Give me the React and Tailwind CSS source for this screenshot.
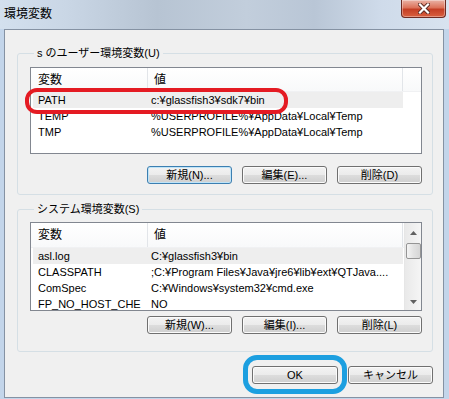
import React from "react";

// Windows 7 style "環境変数" dialog

const btnBase =
  "h-[18px] rounded-[3px] border text-[11px] leading-none text-black bg-[linear-gradient(to_bottom,#f3f3f3_0%,#ebebeb_50%,#dddddd_50%,#cfcfcf_100%)]";

function WinButton({ label, isDefault, width = "w-[85px]" }) {
  return (
    <button
      className={
        isDefault
          ? btnBase + " " + width + " border-[#3c7fb1] shadow-[inset_0_0_0_1px_#bfe4f8]"
          : btnBase + " " + width + " border-[#707070] shadow-[inset_0_0_0_1px_#fbfbfb]"
      }
    >
      {label}
    </button>
  );
}

function Arrow({ down }) {
  return (
    <svg width="7" height="4" viewBox="0 0 7 4">
      {down ? (
        <polygon points="0,0 7,0 3.5,4" fill="#606060" />
      ) : (
        <polygon points="0,4 7,4 3.5,0" fill="#606060" />
      )}
    </svg>
  );
}

function Scrollbar() {
  return (
    <div className="flex w-[17px] shrink-0 flex-col items-center border-l border-[#e6e6e6] bg-[linear-gradient(to_right,#e9e9e9,#f5f5f5)]">
      <div className="flex h-[17px] w-full items-center justify-center pt-[3px]">
        <Arrow />
      </div>
      <div className="mt-[3px] h-[16px] w-[15px] rounded-[2px] border border-[#959595] bg-[linear-gradient(to_right,#f4f4f4,#e2e2e2_50%,#d6d6d6)]" />
      <div className="flex-1" />
      <div className="flex h-[17px] w-full items-center justify-center">
        <Arrow down />
      </div>
    </div>
  );
}

function ListView({ rows, className, headerClass, withScroll }) {
  return (
    <div className={"flex overflow-hidden border border-[#828790] bg-white " + className}>
      <div className="flex min-w-0 flex-1 flex-col">
        <div className={"flex shrink-0 border-b border-[#f0f1f3] bg-[linear-gradient(to_bottom,#ffffff,#f8f9fa)] " + headerClass}>
          <div className="flex w-[117px] items-center border-r border-[#e2e5e9] pl-[7px] text-[12px]">変数</div>
          <div className="flex w-[255px] items-center border-r border-[#e2e5e9] pl-[6px] text-[12px]">値</div>
          <div className="flex-1" />
        </div>
        {rows.map((r, i) => (
          <div key={i} className="flex h-[16px] shrink-0">
            <div
              className={
                i === 0
                  ? "ml-[2px] flex w-[370px] bg-[#eeeeee] text-[11px] leading-[16px]"
                  : "ml-[2px] flex w-[370px] text-[11px] leading-[16px]"
              }
            >
              <div className="w-[115px] shrink-0 overflow-hidden whitespace-nowrap pl-[5px]">{r[0]}</div>
              <div className="min-w-0 flex-1 overflow-hidden whitespace-nowrap pl-[3px]">{r[1]}</div>
            </div>
          </div>
        ))}
      </div>
      {withScroll && <Scrollbar />}
    </div>
  );
}

const userVars = [
  ["PATH", "c:¥glassfish3¥sdk7¥bin"],
  ["TEMP", "%USERPROFILE%¥AppData¥Local¥Temp"],
  ["TMP", "%USERPROFILE%¥AppData¥Local¥Temp"],
];

const sysVars = [
  ["asl.log", "C:¥glassfish3¥bin"],
  ["CLASSPATH", ";C:¥Program Files¥Java¥jre6¥lib¥ext¥QTJava...."],
  ["ComSpec", "C:¥Windows¥system32¥cmd.exe"],
  ["FP_NO_HOST_CHE", "NO"],
];

export default function App() {
  return (
    <div className="relative flex h-[399px] w-[449px] flex-col overflow-hidden bg-[#c3d5ea] font-['Liberation_Sans','Noto_Sans_CJK_JP',sans-serif] text-black">
      {/* Title bar */}
      <div className="flex h-[29px] shrink-0 items-start justify-between bg-[linear-gradient(to_right,#d3e0ee_0%,#c9d6e5_15%,#b7c4d3_35%,#c2cedc_55%,#b9c6d6_70%,#cfdbea_85%,#d8e3ef_100%)]">
        <div className="pl-[4px] pt-[7px] text-[12px] leading-[14px]">環境変数</div>
        <div className="mr-[3px] flex h-[18px] w-[45px] items-center justify-center rounded-b-[4px] border border-t-0 border-[#6e2b22] bg-[linear-gradient(to_bottom,#eab3a6_0%,#dc735a_45%,#c43f25_55%,#d9603f_100%)] shadow-[inset_0_0_0_1px_rgba(255,255,255,0.35)]">
          <svg width="12" height="11" viewBox="0 0 12 11">
            <path d="M2 1.5 L10 9.5 M10 1.5 L2 9.5" stroke="#5a2a22" strokeWidth="4" strokeLinecap="square" />
            <path d="M2 1.5 L10 9.5 M10 1.5 L2 9.5" stroke="#ffffff" strokeWidth="2.2" strokeLinecap="square" />
          </svg>
        </div>
      </div>

      {/* Client area */}
      <div className="mb-[1px] ml-[4px] flex w-[440px] flex-1 flex-col border border-[#8592a3] bg-[#f0f0f0]">
        <fieldset className="ml-[12px] mr-[10px] mt-[16px] rounded-[3px] border border-[#d5dfe5] pb-[10px] pl-[12px] pr-[10px]">
          <legend className="ml-[4px] px-[3px] text-[11px] leading-[14px]">s のユーザー環境変数(U)</legend>
          <ListView rows={userVars} className="mt-[7px] h-[87px]" headerClass="h-[24px]" />
          <div className="mt-[12px] flex justify-end gap-[10px]">
            <WinButton label="新規(N)..." isDefault />
            <WinButton label="編集(E)..." />
            <WinButton label="削除(D)" />
          </div>
        </fieldset>

        <fieldset className="ml-[12px] mr-[10px] mt-[7px] rounded-[3px] border border-[#d5dfe5] pb-[17px] pl-[12px] pr-[10px]">
          <legend className="ml-[4px] px-[3px] text-[11px] leading-[14px]">システム環境変数(S)</legend>
          <ListView rows={sysVars} className="mt-[6px] h-[89px]" headerClass="h-[25px]" withScroll />
          <div className="mt-[5px] flex justify-end gap-[10px]">
            <WinButton label="新規(W)..." />
            <WinButton label="編集(I)..." />
            <WinButton label="削除(L)" />
          </div>
        </fieldset>

        <div className="mr-[10px] mt-[14px] flex justify-end gap-[10px]">
          <WinButton label="OK" width="w-[86px]" />
          <WinButton label="キャンセル" />
        </div>
      </div>

      {/* Annotations */}
      <div className="absolute left-[25px] top-[88px] h-[26px] w-[263px] rounded-[12px] border-[4px] border-[#e41b23]" />
      <div className="absolute left-[243px] top-[355px] h-[39px] w-[104px] rounded-[14px] border-[5px] border-[#1c9fe0]" />
    </div>
  );
}
